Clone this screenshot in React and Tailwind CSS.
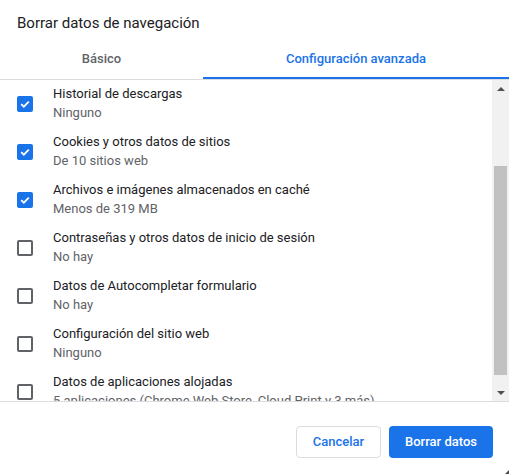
import React, { useState } from 'react';

const items = [
  { title: 'Historial de descargas', sub: 'Ninguno', checked: true },
  { title: 'Cookies y otros datos de sitios', sub: 'De 10 sitios web', checked: true },
  { title: 'Archivos e imágenes almacenados en caché', sub: 'Menos de 319 MB', checked: true },
  { title: 'Contraseñas y otros datos de inicio de sesión', sub: 'No hay', checked: false },
  { title: 'Datos de Autocompletar formulario', sub: 'No hay', checked: false },
  { title: 'Configuración del sitio web', sub: 'Ninguno', checked: false },
  { title: 'Datos de aplicaciones alojadas', sub: '5 aplicaciones (Chrome Web Store, Cloud Print y 3 más)', checked: false },
];

function Checkbox({ checked, onClick }) {
  if (checked) {
    return (
      <button onClick={onClick} className="w-4 h-4 rounded-[2px] bg-[#1a73e8] flex items-center justify-center shrink-0">
        <svg width="12" height="12" viewBox="0 0 12 12">
          <path d="M2.2 6.2 L4.8 8.7 L9.8 3.6" fill="none" stroke="#fff" strokeWidth="1.8" />
        </svg>
      </button>
    );
  }
  return <button onClick={onClick} className="w-4 h-4 rounded-[2px] border-2 border-[#5f6368] shrink-0" />;
}

export default function App() {
  const [tab, setTab] = useState('advanced');
  const [checks, setChecks] = useState(items.map((i) => i.checked));

  const toggle = (idx) => setChecks(checks.map((c, i) => (i === idx ? !c : c)));

  return (
    <div className="relative w-[509px] h-[474px] bg-white font-['Roboto',sans-serif] text-[13px] text-[#202124] overflow-hidden">
      {/* header */}
      <div className="h-10 pl-[17px] pt-[13px]">
        <h1 className="text-[15px] leading-5 font-normal text-[#202124]">Borrar datos de navegación</h1>
      </div>

      {/* tabs */}
      <div className="flex border-b border-[#dadce0]">
        <button
          onClick={() => setTab('basic')}
          className={`w-[203px] h-[39px] border-b-2 font-medium text-[13px] ${
            tab === 'basic' ? 'border-[#1a73e8] text-[#1a73e8]' : 'border-transparent text-[#5f6368]'
          }`}
        >
          Básico
        </button>
        <button
          onClick={() => setTab('advanced')}
          className={`flex-1 h-[39px] border-b-2 font-medium text-[13px] ${
            tab === 'advanced' ? 'border-[#1a73e8] text-[#1a73e8]' : 'border-transparent text-[#5f6368]'
          }`}
        >
          Configuración avanzada
        </button>
      </div>

      {/* list */}
      <div className="flex h-[322px] border-b border-[#dadce0]">
        <div className="flex-1 overflow-hidden">
          {items.map((item, idx) => (
            <div key={idx} className="h-12 flex items-center">
              <div className="w-[53px] pl-[17px] flex">
                <Checkbox checked={checks[idx]} onClick={() => toggle(idx)} />
              </div>
              <div className="flex-1 min-w-0 self-start pt-1">
                <div className="leading-[19px] text-[#202124] whitespace-nowrap">{item.title}</div>
                <div className="leading-[19px] text-[#5f6368] whitespace-nowrap">{item.sub}</div>
              </div>
            </div>
          ))}
        </div>

        {/* scrollbar */}
        <div className="w-[17px] bg-[#f1f1f1] flex flex-col">
          <div className="h-[17px] flex items-center justify-center">
            <svg width="8" height="4" viewBox="0 0 8 4">
              <path d="M0 4 L4 0 L8 4 Z" fill="#505050" />
            </svg>
          </div>
          <div className="flex-1 flex flex-col">
            <div className="h-[69px]" />
            <div className="h-[209px] mx-[2px] bg-[#c1c1c1]" />
          </div>
          <div className="h-[17px] flex items-center justify-center">
            <svg width="8" height="4" viewBox="0 0 8 4">
              <path d="M0 0 L8 0 L4 4 Z" fill="#505050" />
            </svg>
          </div>
        </div>
      </div>

      {/* footer */}
      <div className="flex justify-end gap-2 pt-6 pr-4">
        <button className="w-[85px] h-8 rounded border border-[#dadce0] bg-white text-[#1a73e8] font-medium text-[13px]">
          Cancelar
        </button>
        <button className="w-[104px] h-8 rounded bg-[#1a73e8] text-white font-medium text-[13px]">
          Borrar datos
        </button>
      </div>

      <svg className="absolute right-0 bottom-0" width="4" height="4" viewBox="0 0 4 4">
        <path d="M4 0 L4 4 L0 4 Z" fill="#505050" />
      </svg>
    </div>
  );
}
